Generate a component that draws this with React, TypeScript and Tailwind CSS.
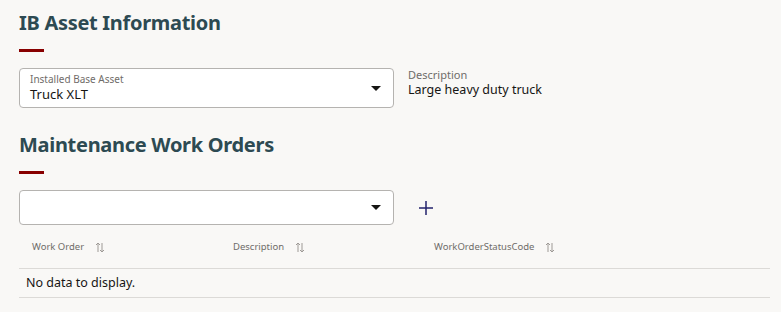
const font = { fontFamily: '"Noto Sans", "Open Sans", sans-serif' };

function Caret() {
  return (
    <svg width="10" height="5" viewBox="0 0 10 5" className="shrink-0">
      <polygon points="0,0 10,0 5,5" fill="#161513" />
    </svg>
  );
}

function SortIcon() {
  return (
    <svg width="10" height="11" viewBox="0 0 10 11" fill="none" stroke="#9e9a96" strokeWidth="1">
      <line x1="3" y1="1" x2="3" y2="10" />
      <polyline points="1,3 3,1 5,3" />
      <line x1="7" y1="1" x2="7" y2="10" />
      <polyline points="5,8 7,10 9,8" />
    </svg>
  );
}

function SectionTitle({ children }: { children: string }) {
  return (
    <div>
      <h2 className="text-[20px] font-bold leading-[30px] tracking-[-0.3px] text-[#2d4a52]">{children}</h2>
      <div className="mt-[11px] h-[3px] w-[25px] bg-[#880000]" />
    </div>
  );
}

export default function App() {
  const cols = [
    { label: "Work Order", w: "w-[201px]" },
    { label: "Description", w: "w-[201px]" },
    { label: "WorkOrderStatusCode", w: "flex-1" },
  ];

  return (
    <div className="min-h-[312px] w-[781px] bg-[#f9f8f6] pl-[19px] pr-[11px] pt-[8px]" style={font}>
      {/* IB Asset */}
      <SectionTitle>IB Asset Information</SectionTitle>

      <div className="mt-[16px] flex items-start gap-[14px]">
        <div className="flex h-[40px] w-[375px] items-center justify-between rounded-[4px] border border-[#b5b3b0] bg-white pl-[10px] pr-[12px]">
          <div className="flex flex-col">
            <span className="text-[10px] leading-[13px] text-[#6f6c69]">Installed Base Asset</span>
            <span className="text-[13px] leading-[17px] text-[#161513]">Truck XLT</span>
          </div>
          <Caret />
        </div>
        <div className="flex flex-col">
          <span className="text-[11px] leading-[14px] text-[#6f6c69]">Description</span>
          <span className="text-[12.5px] leading-[16px] text-[#161513]">Large heavy duty truck</span>
        </div>
      </div>

      {/* Maintenance */}
      <div className="mt-[22px]">
        <SectionTitle>Maintenance Work Orders</SectionTitle>
      </div>

      <div className="mt-[16px] flex items-center">
        <div className="flex h-[35px] w-[375px] items-center justify-end rounded-[4px] border border-[#b5b3b0] bg-white pr-[12px]">
          <Caret />
        </div>
        <button className="ml-[25px] flex h-[20px] w-[14px] items-center justify-center">
          <svg width="14" height="14" viewBox="0 0 14 14" stroke="#22226b" strokeWidth="1.5">
            <line x1="7" y1="0" x2="7" y2="14" />
            <line x1="0" y1="7" x2="14" y2="7" />
          </svg>
        </button>
      </div>

      {/* Table */}
      <div className="mt-[1px]">
        <div className="flex h-[43px] items-center border-b border-[#dcdad7] pl-[13px]">
          {cols.map(c => (
            <div key={c.label} className={`${c.w} flex items-center gap-[11px]`}>
              <span className="text-[9.5px] text-[#6f6c69]">{c.label}</span>
              <SortIcon />
            </div>
          ))}
        </div>
        <div className="flex h-[29px] items-center border-b border-[#dcdad7] pl-[7px]">
          <span className="text-[12.5px] text-[#161513]">No data to display.</span>
        </div>
      </div>
    </div>
  );
}
